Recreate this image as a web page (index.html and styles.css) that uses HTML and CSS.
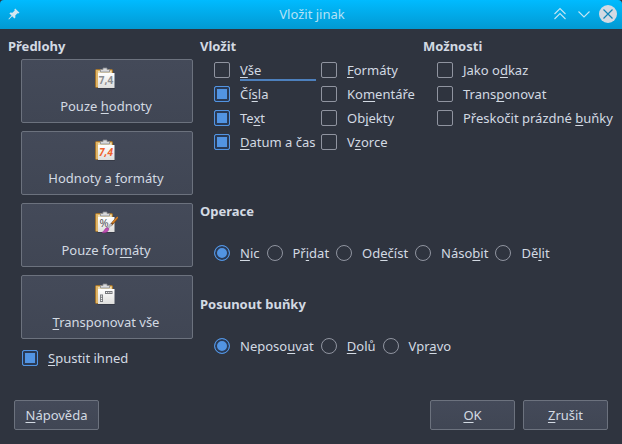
FILE: index.html
```html
<!DOCTYPE html>
<html lang="cs">
<head>
  <meta charset="UTF-8">
  <title>Vložit jinak</title>
  <link rel="stylesheet" href="styles.css">
</head>
<body>

  <!-- Shared clipboard drawing -->
  <svg class="defs" aria-hidden="true">
    <defs>
      <linearGradient id="paper" x1="0" y1="0" x2="0" y2="1">
        <stop offset="0" stop-color="#ffffff"/>
        <stop offset="1" stop-color="#dededc"/>
      </linearGradient>
      <symbol id="clipboard" viewBox="0 0 24 24">
        <rect x="1.500" y="3.500" width="17" height="18" rx="1" fill="#dfb568" stroke="#a5742a"/>
        <rect x="4" y="5" width="13.500" height="3" fill="#f0dfb4"/>
        <path d="M6.500 6v-2.500h2.500v-1.500h4v1.500h2.500v2.500z" fill="#d8d9dc" stroke="#85888e" stroke-width=".8"/>
        <rect x="4" y="7" width="16.500" height="15" fill="url(#paper)"/>
        <path d="M3.500 22.500h17.500" stroke="#2b2e38" stroke-opacity=".5"/>
      </symbol>
    </defs>
  </svg>

  <header class="titlebar">
    <button class="tool" type="button" aria-label="Připnout">
      <svg width="14" height="14" viewBox="0 0 14 14"><path d="M8.200 1.500 12.500 5.800 11.200 6.600 10.500 6.300 8.300 8.600 8.400 10.600 7.400 11.500 5.200 9.300 2 12.500 1.400 12 4.500 8.600 2.400 6.500 3.400 5.600 5.400 5.700 7.700 3.500 7.400 2.600z" fill="#d3e6f0"/></svg>
    </button>
    <h1>Vložit jinak</h1>
    <div class="tools">
      <button class="tool" type="button" aria-label="Maximalizovat">
        <svg width="18" height="18" viewBox="0 0 18 18"><path d="M3.500 9 9 3.500 14.500 9M3.500 14 9 8.500 14.500 14" fill="none" stroke="#c4e6f4" stroke-width="1.100"/></svg>
      </button>
      <button class="tool" type="button" aria-label="Minimalizovat">
        <svg width="18" height="18" viewBox="0 0 18 18"><path d="M3.500 6.500 9 12 14.500 6.500" fill="none" stroke="#c4e6f4" stroke-width="1.100"/></svg>
      </button>
      <button class="tool" type="button" aria-label="Zavřít">
        <svg width="18" height="18" viewBox="0 0 18 18"><circle cx="9" cy="9" r="9" fill="#d3dae3"/><path d="M4.500 4.500 13.500 13.500M13.500 4.500 4.500 13.500" stroke="#1286b8" stroke-width="1.200"/></svg>
      </button>
    </div>
  </header>

  <main class="content">

    <section class="presets">
      <h2>Předlohy</h2>
      <div class="preset-list">
        <button class="btn preset" type="button">
          <svg width="24" height="24" viewBox="0 0 24 24"><use href="#clipboard"/><text x="12" y="18" class="digits">7,4</text></svg>
          <span>Pouze <u>h</u>odnoty</span>
        </button>
        <button class="btn preset" type="button">
          <svg width="24" height="24" viewBox="0 0 24 24"><use href="#clipboard"/><text x="12" y="18" class="digits red">7,4</text></svg>
          <span>Hodnoty a <u>f</u>ormáty</span>
        </button>
        <button class="btn preset" type="button">
          <svg width="24" height="24" viewBox="0 0 24 24"><use href="#clipboard"/><text x="10" y="17" class="digits percent">%</text>
            <path d="M16.500 15.500 23.500 7.500" stroke="#7b4a1c" stroke-width="2.600"/>
            <path d="M18.500 13 23.800 7" stroke="#d98324" stroke-width="1.400"/>
            <path d="M13.500 18.500 17.500 14" stroke="#b5b8c0" stroke-width="2.400"/>
            <path d="M14.800 18.800C14.500 21.500 12 23.500 8 22.500 10.500 21.500 10.500 18.500 13 17.500z" fill="#c04fb4" stroke="#8d2d86" stroke-width=".6"/>
          </svg>
          <span>Pouze for<u>m</u>áty</span>
        </button>
        <button class="btn preset" type="button">
          <svg width="24" height="24" viewBox="0 0 24 24"><use href="#clipboard"/>
            <path d="M11 9h7.500v3h-7.500zM6 12.500h3v7.500h-3z" fill="#77797d"/>
            <path d="M12 10.500h1.200M14.200 10.500h1.200M16.400 10.500h1.200M6.900 14.200h1.200M6.900 16.300h1.200M6.900 18.400h1.200" stroke="#f4f4f4" stroke-width="1.200"/>
          </svg>
          <span><u>T</u>ransponovat vše</span>
        </button>
        <label class="option"><input type="checkbox" checked><span><u>S</u>pustit ihned</span></label>
      </div>
    </section>

    <div class="settings">
      <section>
        <h2>Vložit</h2>
        <div class="checks two-cols">
          <label class="option"><input type="checkbox"><span class="focused"><u>V</u>še</span></label>
          <label class="option"><input type="checkbox"><span><u>F</u>ormáty</span></label>
          <label class="option"><input type="checkbox" checked><span>Čí<u>s</u>la</span></label>
          <label class="option"><input type="checkbox"><span>Ko<u>m</u>entáře</span></label>
          <label class="option"><input type="checkbox" checked><span>Te<u>x</u>t</span></label>
          <label class="option"><input type="checkbox"><span>Ob<u>j</u>ekty</span></label>
          <label class="option"><input type="checkbox" checked><span><u>D</u>atum a čas</span></label>
          <label class="option"><input type="checkbox"><span>V<u>z</u>orce</span></label>
        </div>
      </section>

      <section>
        <h2>Možnosti</h2>
        <div class="checks">
          <label class="option"><input type="checkbox"><span>Jako o<u>d</u>kaz</span></label>
          <label class="option"><input type="checkbox"><span>Trans<u>p</u>onovat</span></label>
          <label class="option"><input type="checkbox"><span>Přeskočit prázdné <u>b</u>uňky</span></label>
        </div>
      </section>

      <section class="wide operations">
        <h2>Operace</h2>
        <div class="radios">
          <label class="option"><input type="radio" name="operace" checked><span><u>N</u>ic</span></label>
          <label class="option"><input type="radio" name="operace"><span>Př<u>i</u>dat</span></label>
          <label class="option"><input type="radio" name="operace"><span>Od<u>e</u>číst</span></label>
          <label class="option"><input type="radio" name="operace"><span>Náso<u>b</u>it</span></label>
          <label class="option"><input type="radio" name="operace"><span>Dě<u>l</u>it</span></label>
        </div>
      </section>

      <section class="wide">
        <h2>Posunout buňky</h2>
        <div class="radios">
          <label class="option"><input type="radio" name="posun" checked><span>Neposo<u>u</u>vat</span></label>
          <label class="option"><input type="radio" name="posun"><span><u>D</u>olů</span></label>
          <label class="option"><input type="radio" name="posun"><span>Vpr<u>a</u>vo</span></label>
        </div>
      </section>
    </div>

  </main>

  <footer class="actions">
    <button class="btn help" type="button"><span><u>N</u>ápověda</span></button>
    <button class="btn" type="button"><span><u>O</u>K</span></button>
    <button class="btn" type="button"><span><u>Z</u>rušit</span></button>
  </footer>

</body>
</html>
```

FILE: styles.css
```css
* {
  box-sizing: border-box;
}
body {
  margin: 0;
  min-height: 100vh;
  display: flex;
  flex-direction: column;
  background: #2f343f;
  color: #d3dae3;
  font-family: "Noto Sans", sans-serif;
  font-size: 13px;
  line-height: 18px;
}
button {
  font: inherit;
  color: inherit;
}
u {
  text-decoration-thickness: 1px;
  text-underline-offset: 2px;
  text-decoration-skip-ink: none;
}
.defs {
  display: block;
  width: 0;
  height: 0;
}

/* Title bar */
.titlebar {
  display: grid;
  grid-template-columns: 1fr auto 1fr;
  align-items: center;
  height: 29px;
  padding: 0 5px 2px 7px;
  background: linear-gradient(#00bbff, #0299d2);
  border-radius: 4px 4px 0 0;
}
.titlebar h1 {
  margin: 0;
  color: #b4e2f6;
  font-size: 13px;
  font-weight: normal;
}
.tools {
  display: flex;
  justify-content: flex-end;
  gap: 6px;
}
.tool {
  display: flex;
  padding: 0;
  border: 0;
  background: none;
  justify-self: start;
}

/* Dialog body */
.content {
  display: grid;
  grid-template-columns: 192px 1fr;
  padding: 6px 8px 0;
}
h2 {
  margin: 0;
  font-size: 13px;
  font-weight: bold;
  line-height: 23px;
}
.btn {
  min-width: 85px;
  height: 30px;
  padding: 0 10px;
  border: 1px solid #6c727e;
  border-radius: 2px;
  background: linear-gradient(#444a59, #404654);
}
.preset-list {
  display: flex;
  flex-direction: column;
  gap: 8px;
  padding: 1px 7px 0 13px;
}
.preset {
  display: flex;
  flex-direction: column;
  align-items: center;
  justify-content: flex-start;
  gap: 7px;
  height: 64px;
  padding: 6px 8px 6px 6px;
}
.digits {
  font-size: 10px;
  font-weight: bold;
  fill: #8b8d90;
  text-anchor: middle;
}
.red {
  fill: #f0622d;
  font-style: italic;
}
.percent {
  font-size: 11px;
  font-weight: normal;
  fill: #55575b;
}
.preset-list .option {
  margin-top: -1px;
  padding-left: 1px;
}

/* Check boxes and radios */
.settings {
  display: grid;
  grid-template-columns: 223px 1fr;
  align-content: start;
}
.checks,
.radios {
  padding-left: 14px;
}
.two-cols {
  display: grid;
  grid-template-columns: 107px 1fr;
}
.radios {
  display: flex;
  gap: 7px;
  padding-top: 18px;
}
.wide {
  grid-column: 1 / -1;
}
.operations {
  padding: 46px 0 28px;
}
.option {
  display: flex;
  align-items: center;
  gap: 10px;
  height: 24px;
  white-space: nowrap;
}
.option input {
  appearance: none;
  flex: none;
  width: 16px;
  height: 16px;
  margin: 0;
  border: 1px solid #9094a0;
  border-radius: 2px;
}
.option input[type="radio"] {
  border-radius: 50%;
}
.option input:checked {
  border-color: #5294e2;
  background: #5294e2;
  box-shadow: inset 0 0 0 2px #2a3a55;
}
.focused {
  flex: 1;
  margin-right: 5px;
  box-shadow: 0 2px #4d80bd;
}

/* Bottom buttons */
.actions {
  display: flex;
  gap: 8px;
  margin-top: auto;
  padding: 14px;
}
.help {
  margin-right: auto;
}
```
